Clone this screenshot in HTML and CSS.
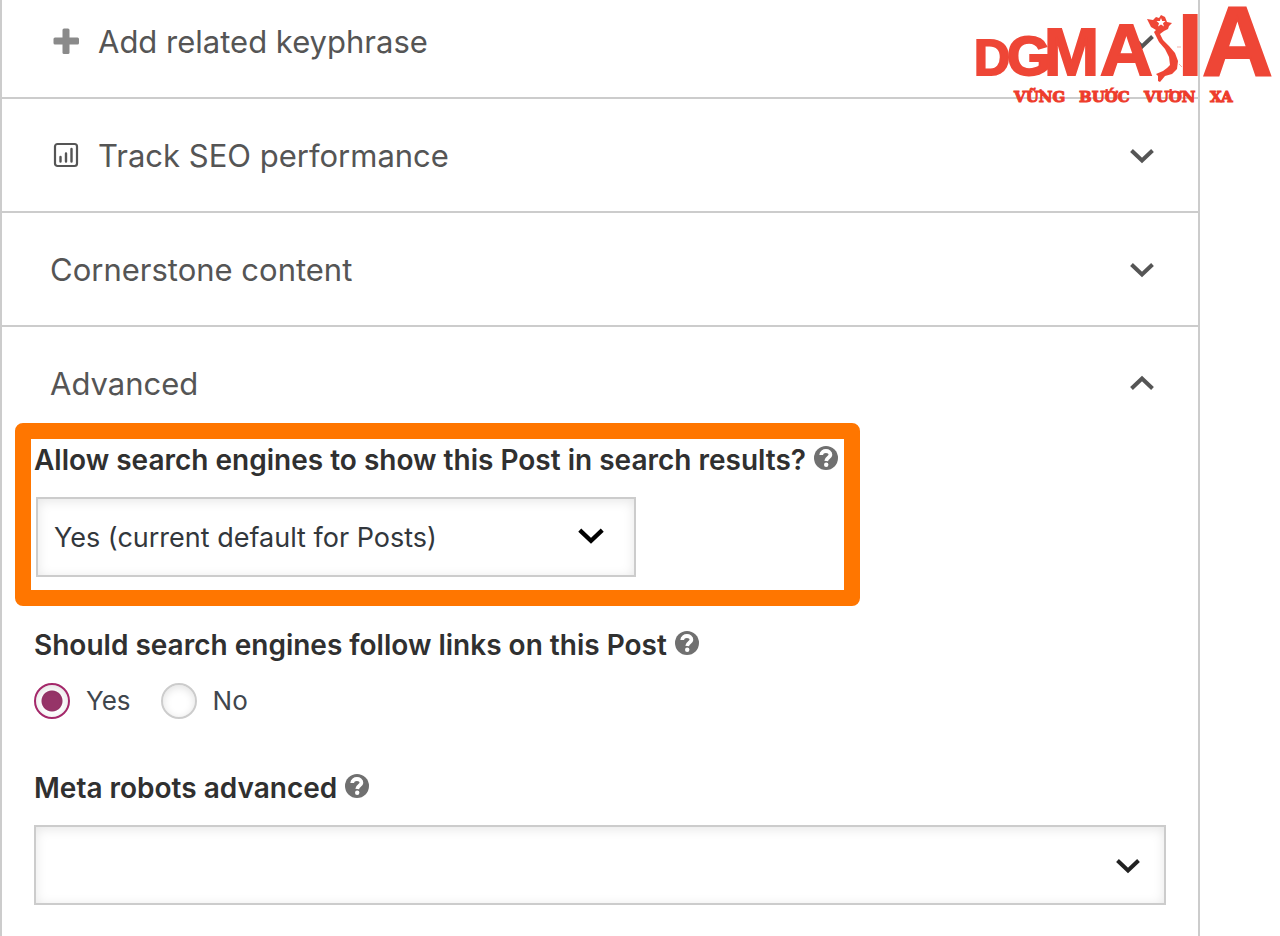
FILE: index.html
```html
<!DOCTYPE html>
<html lang="en">
<head>
  <meta charset="UTF-8">
  <title>Advanced</title>
  <link rel="stylesheet" href="styles.css">
</head>
<body>

  <!-- shared icons -->
  <svg class="sprite" aria-hidden="true">
    <symbol id="chevron-down" viewBox="0 0 28 28">
      <path d="M3.500 8.500 L14 18.500 L24.500 8.500"></path>
    </symbol>
    <symbol id="chevron-up" viewBox="0 0 28 28">
      <path d="M3.500 18.500 L14 8.500 L24.500 18.500"></path>
    </symbol>
    <symbol id="help" viewBox="0 0 24 24">
      <circle cx="12" cy="12" r="12" fill="#707070"></circle>
      <path d="M7.200 9 C7.400 3.600 16.600 3.800 16.400 8.800 C16.200 11.700 12.600 11.200 12.200 15" fill="none" stroke="#fff" stroke-width="3.800"></path>
      <circle cx="12.200" cy="18.800" r="2.200" fill="#fff"></circle>
    </symbol>
  </svg>

  <main class="panel">
    <button type="button" class="row row-first">
      <svg class="row-icon" viewBox="0 0 32 32" fill="#8a8a8a">
        <rect x="12.500" y="2.500" width="7" height="25.500" rx="1.500"></rect>
        <rect x="3.500" y="11.500" width="25.500" height="7" rx="1.500"></rect>
      </svg>
      <span>Add related keyphrase</span>
      <svg class="chevron"><use href="#chevron-down"></use></svg>
    </button>

    <button type="button" class="row">
      <svg class="row-icon" viewBox="0 0 32 32" fill="none" stroke="#555">
        <rect x="5" y="4" width="22" height="22" rx="2.500" stroke-width="2.200"></rect>
        <path d="M10.500 21.500 V17 M16 21.500 V13.500 M21.500 21.500 V9" stroke-width="2.400" stroke-linecap="round"></path>
      </svg>
      <span>Track SEO performance</span>
      <svg class="chevron"><use href="#chevron-down"></use></svg>
    </button>

    <button type="button" class="row">
      <span>Cornerstone content</span>
      <svg class="chevron"><use href="#chevron-down"></use></svg>
    </button>

    <button type="button" class="row row-open" aria-expanded="true">
      <span>Advanced</span>
      <svg class="chevron"><use href="#chevron-up"></use></svg>
    </button>

    <div class="highlight">
      <div class="heading">
        <label for="noindex">Allow search engines to show this Post in search results?</label>
        <button type="button" class="help" aria-label="Help"><svg><use href="#help"></use></svg></button>
      </div>
      <div class="select-box select-index">
        <select id="noindex">
          <option>Yes (current default for Posts)</option>
          <option>Yes</option>
          <option>No</option>
        </select>
        <svg class="chevron"><use href="#chevron-down"></use></svg>
      </div>
    </div>

    <div class="fields">
      <div class="heading" id="follow-title">
        <span>Should search engines follow links on this Post</span>
        <button type="button" class="help" aria-label="Help"><svg><use href="#help"></use></svg></button>
      </div>
      <div class="radios" role="radiogroup" aria-labelledby="follow-title">
        <input type="radio" name="follow" id="follow-yes" checked>
        <label for="follow-yes">Yes</label>
        <input type="radio" name="follow" id="follow-no">
        <label for="follow-no">No</label>
      </div>

      <div class="heading">
        <label for="robots">Meta robots advanced</label>
        <button type="button" class="help" aria-label="Help"><svg><use href="#help"></use></svg></button>
      </div>
      <div class="select-box select-robots">
        <select id="robots">
          <option></option>
          <option>No Archive</option>
          <option>No Snippet</option>
        </select>
        <svg class="chevron"><use href="#chevron-down"></use></svg>
      </div>
    </div>
  </main>

  <!-- logo over the top right corner -->
  <svg class="logo" viewBox="0 0 320 120" role="img" aria-label="DGM Asia">
    <g class="logo-name">
      <text x="14" y="75" font-size="50">D</text>
      <text x="47" y="75" font-size="56">G</text>
      <text x="84" y="75" font-size="66">M</text>
      <text x="140" y="75" font-size="73">A</text>
      <text x="218" y="75" font-size="88">I</text>
      <text x="242" y="75" font-size="98">A</text>
    </g>
    <path class="logo-map" d="M187 19 L193 20 L196 17 L199 18 L201 15 L205 17 L207 22 L212 23 L209 26 L208 29 L204 31 L200 34 L203 40 L209 46 L215 53 L218 61 L217 69 L212 74 L205 76 L200 82 L198 81 L198 76 L196 74 L203 71 L207 68 L210 65 L209 57 L205 49 L199 42 L196 36 L194 32 L196 30 L191 27 Z"></path>
    <path d="M201 18 L202.200 21 L205.500 21 L203 23.200 L204 26.500 L201 24.500 L198 26.500 L199 23.200 L196.500 21 L199.800 21 Z" fill="#fff"></path>
    <path d="M217 47 h4 M219 64 l3 3" stroke="#f5b0a8" stroke-width="1"></path>
    <g class="logo-motto">
      <text x="54" y="102">VỮNG</text>
      <text x="119" y="102">BƯỚC</text>
      <text x="184" y="102">VƯƠN</text>
      <text x="250" y="102">XA</text>
    </g>
  </svg>

</body>
</html>
```
FILE: styles.css
```css
* {
  box-sizing: border-box;
}
body {
  margin: 0;
  background-color: #fff;
  font-family: Inter, "Liberation Sans", sans-serif;
  color: #303030;
}
button, select {
  font-family: inherit;
}
.sprite {
  display: none;
}
.panel {
  min-height: 100vh;
  margin-right: 80px;
  border-left: 2px solid #ccc;
  border-right: 2px solid #ccc;
}

/* collapsible rows */
.row {
  display: flex;
  align-items: center;
  gap: 16px;
  width: 100%;
  height: 114px;
  padding: 2px 42px 0 48px;
  border: none;
  border-bottom: 2px solid #ccc;
  background: none;
  color: #555;
  font-size: 31px;
  line-height: 40px;
  text-align: left;
  cursor: pointer;
}
.row-first {
  height: 99px;
  padding-bottom: 15px;
}
.row-open {
  height: 96px;
  padding-top: 18px;
  border-bottom: none;
}
.row-icon {
  width: 32px;
  height: 32px;
}
.chevron {
  width: 28px;
  height: 28px;
  margin-left: auto;
  fill: none;
  stroke: #555;
  stroke-width: 4;
}

/* fields */
.highlight {
  max-width: 845px;
  margin: 0 13px;
  padding: 0 4px 13px 3px;
  border: 16px solid #ff7600;
  border-radius: 8px;
}
.heading {
  display: flex;
  align-items: center;
  gap: 8px;
  font-size: 28px;
  font-weight: 600;
  line-height: 42px;
}
.help {
  width: 24px;
  height: 24px;
  margin-bottom: 4px;
  padding: 0;
  border: none;
  background: none;
  cursor: pointer;
}
.help svg {
  display: block;
  width: 24px;
  height: 24px;
}
.select-box {
  position: relative;
}
.select-box select {
  width: 100%;
  height: 80px;
  padding: 0 16px;
  border: 2px solid #ccc;
  border-radius: 0;
  background-color: #fff;
  box-shadow: inset 0 2px 12px rgba(0, 0, 0, 0.1);
  color: #32373c;
  font-size: 27px;
  appearance: none;
}
.select-box .chevron {
  position: absolute;
  top: 27px;
  right: 24px;
  stroke: #222;
  pointer-events: none;
}
.select-index {
  max-width: 600px;
  margin: 16px 0 0 2px;
}
.select-index .chevron {
  top: 24px;
  right: 30px;
  width: 30px;
  height: 30px;
  stroke: #000;
}
.select-robots {
  margin-top: 16px;
}
.fields {
  padding: 18px 32px 31px;
}
.radios {
  display: flex;
  align-items: center;
  margin: 17px 0 48px;
  color: #40464d;
  font-size: 26px;
  line-height: 36px;
}
.radios input {
  width: 36px;
  height: 36px;
  margin: 0 16px 0 0;
  border: 2px solid #ccc;
  border-radius: 50%;
  background-color: #fff;
  box-shadow: inset 0 2px 8px rgba(0, 0, 0, 0.12);
  appearance: none;
}
.radios input:checked {
  border-color: #a4286a;
  background-image: radial-gradient(circle, #963468 10px, transparent 11px);
}
.radios label {
  margin-right: 30px;
}

/* logo */
.logo {
  position: absolute;
  top: 0;
  right: 0;
  width: 320px;
  height: 120px;
  pointer-events: none;
}
.logo-name {
  fill: #ee4636;
  stroke: #ee4636;
  stroke-width: 2;
  font-family: "Liberation Sans", Arial, sans-serif;
  font-weight: bold;
}
.logo-map {
  fill: #ee4636;
  stroke: #fff;
  stroke-width: 2;
  paint-order: stroke;
}
.logo-motto {
  fill: #ee3c2c;
  stroke: #ee3c2c;
  stroke-width: 1;
  font-family: "DejaVu Serif", serif;
  font-size: 15px;
  font-weight: bold;
}
```
